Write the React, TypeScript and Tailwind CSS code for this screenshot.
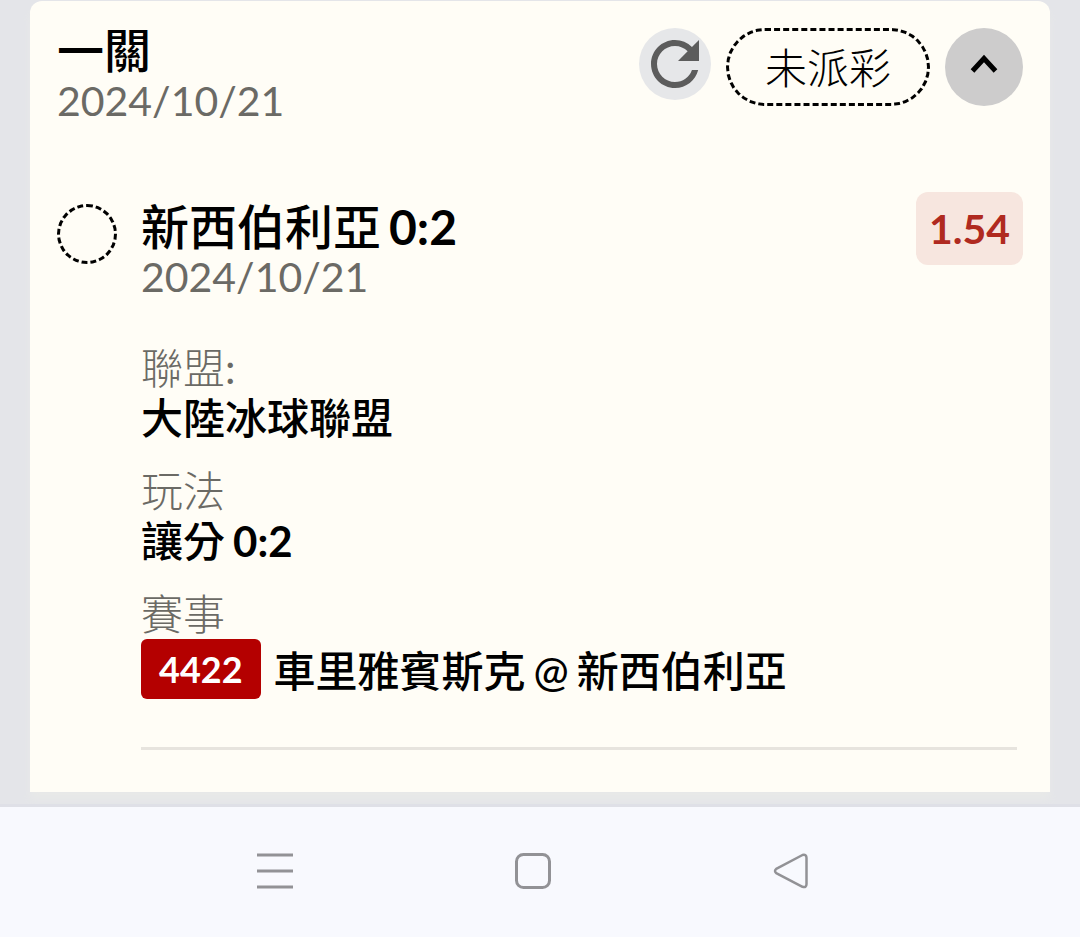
import React, { useState } from 'react';
import { MdRefresh } from 'react-icons/md';

const bet = {
    title: '一關',
    date: '2024/10/21',
    status: '未派彩',
    pick: { team: '新西伯利亞', score: '0:2', date: '2024/10/21', odds: '1.54' },
    league: '大陸冰球聯盟',
    play: { name: '讓分', score: '0:2' },
    game: { code: '4422', away: '車里雅賓斯克', home: '新西伯利亞' },
};

function Field({ label, children }: { label: React.ReactNode, children: React.ReactNode }) {
    return (
        <div>
            <dt className='font-extralight text-[#6b6a65]'>{label}</dt>
            <dd className='leading-[50px] font-medium text-black'>{children}</dd>
        </div>
    )
}

export default function App() {
    const [isOpen, setIsOpen] = useState(true);

    return (
        <div className="flex min-h-screen flex-col bg-[#e4e5e9] font-['Lato','Noto_Sans_CJK_TC',sans-serif] text-[42px] leading-[49px]">
            <main className='px-[30px] pt-px pb-3'>
                <article className='rounded-t-xl bg-[#fffdf6] pt-[27px] pr-[27px] pb-[42px] pl-[27px] shadow-[0_8px_8px_#e8e9e8]'>
                    <header className='flex items-start justify-between'>
                        <div>
                            <h1 className='mb-[3px] text-[47px] leading-[45px] font-medium text-black'>{bet.title}</h1>
                            <p className='text-[41px] text-[#6b6a65]'>{bet.date}</p>
                        </div>
                        <div className='flex items-start gap-[15px]'>
                            <button aria-label='重新整理' className='size-[72px] rounded-full bg-[#e6e7e9]'>
                                <MdRefresh className='size-full text-[#5c5c5c]' />
                            </button>
                            <span className='flex h-[78px] items-center rounded-full border-3 border-dashed border-black px-9 pt-[2px] font-light text-black'>
                                {bet.status}
                            </span>
                            <button
                                aria-label='收合'
                                aria-expanded={isOpen}
                                onClick={() => setIsOpen(!isOpen)}
                                className='size-[78px] rounded-full bg-[#cdcccc]'>
                                <svg className={isOpen ? 'size-full' : 'size-full rotate-180'} viewBox='0 0 78 78' fill='none'>
                                    <path d='M27.500 43L39 30.500L50.500 43' stroke='#000' strokeWidth='5' />
                                </svg>
                            </button>
                        </div>
                    </header>

                    {
                        isOpen &&
                        <section className='mt-[67px] flex items-start'>
                            <span className='mt-3 size-[60px] shrink-0 rounded-full border-3 border-dashed border-black' />
                            <div className='ml-6 grow'>
                                <div className='flex items-start justify-between'>
                                    <div className='pt-[10px]'>
                                        <h2 className='flex gap-2 text-5xl leading-[50px] font-medium text-black'>
                                            <span>{bet.pick.team}</span>
                                            <span className='font-bold'>{bet.pick.score}</span>
                                        </h2>
                                        <p className='text-[41px] text-[#6b6a65]'>{bet.pick.date}</p>
                                    </div>
                                    <span className='rounded-xl bg-[#f7e6df] px-[13px] py-3 text-[41px] font-bold text-[#b02a20]'>{bet.pick.odds}</span>
                                </div>

                                <dl className='mt-[43px] flex flex-col gap-6'>
                                    <Field label={<>聯盟<span className='font-normal'>:</span></>}>{bet.league}</Field>
                                    <Field label='玩法'>
                                        <span className='flex gap-2'>
                                            <span>{bet.play.name}</span>
                                            <span className='font-bold'>{bet.play.score}</span>
                                        </span>
                                    </Field>
                                    <Field label='賽事'>
                                        <span className='flex items-center gap-[13px]'>
                                            <span className='rounded-md bg-[#b40000] px-[18px] py-[5px] text-4xl leading-[50px] font-bold text-white'>{bet.game.code}</span>
                                            <span className='flex gap-2 pt-1'>
                                                <span>{bet.game.away}</span>
                                                <span>@</span>
                                                <span>{bet.game.home}</span>
                                            </span>
                                        </span>
                                    </Field>
                                </dl>
                                <hr className='mt-12 mr-[6px] border-t-3 border-[#e7e4de]' />
                            </div>
                        </section>
                    }
                </article>
            </main>

            {/* phone navigation bar */}
            <nav className='flex grow items-center justify-center gap-[222px] border-t-3 border-[#dfe0e7] bg-[#f8f9fe] pr-[14px] pb-[3px] text-[#929296]'>
                <button aria-label='選單'>
                    <svg className='size-9' viewBox='0 0 36 36' fill='none' stroke='currentColor' strokeWidth='3'>
                        <path d='M0 2H36M0 18H36M0 34H36' />
                    </svg>
                </button>
                <button aria-label='主畫面'>
                    <svg className='size-9' viewBox='0 0 36 36' fill='none' stroke='currentColor' strokeWidth='3'>
                        <rect x='1.500' y='1.500' width='33' height='33' rx='7' />
                    </svg>
                </button>
                <button aria-label='返回'>
                    <svg className='size-9' viewBox='0 0 36 36' fill='none' stroke='currentColor' strokeWidth='2.500' strokeLinejoin='round'>
                        <path d='M3.200 15.900L29.500 2Q33.500 1 33.500 5V31Q33.500 35 29.500 33.800L3.200 20.100Q0.800 18 3.200 15.900Z' />
                    </svg>
                </button>
            </nav>
        </div>
    )
}
